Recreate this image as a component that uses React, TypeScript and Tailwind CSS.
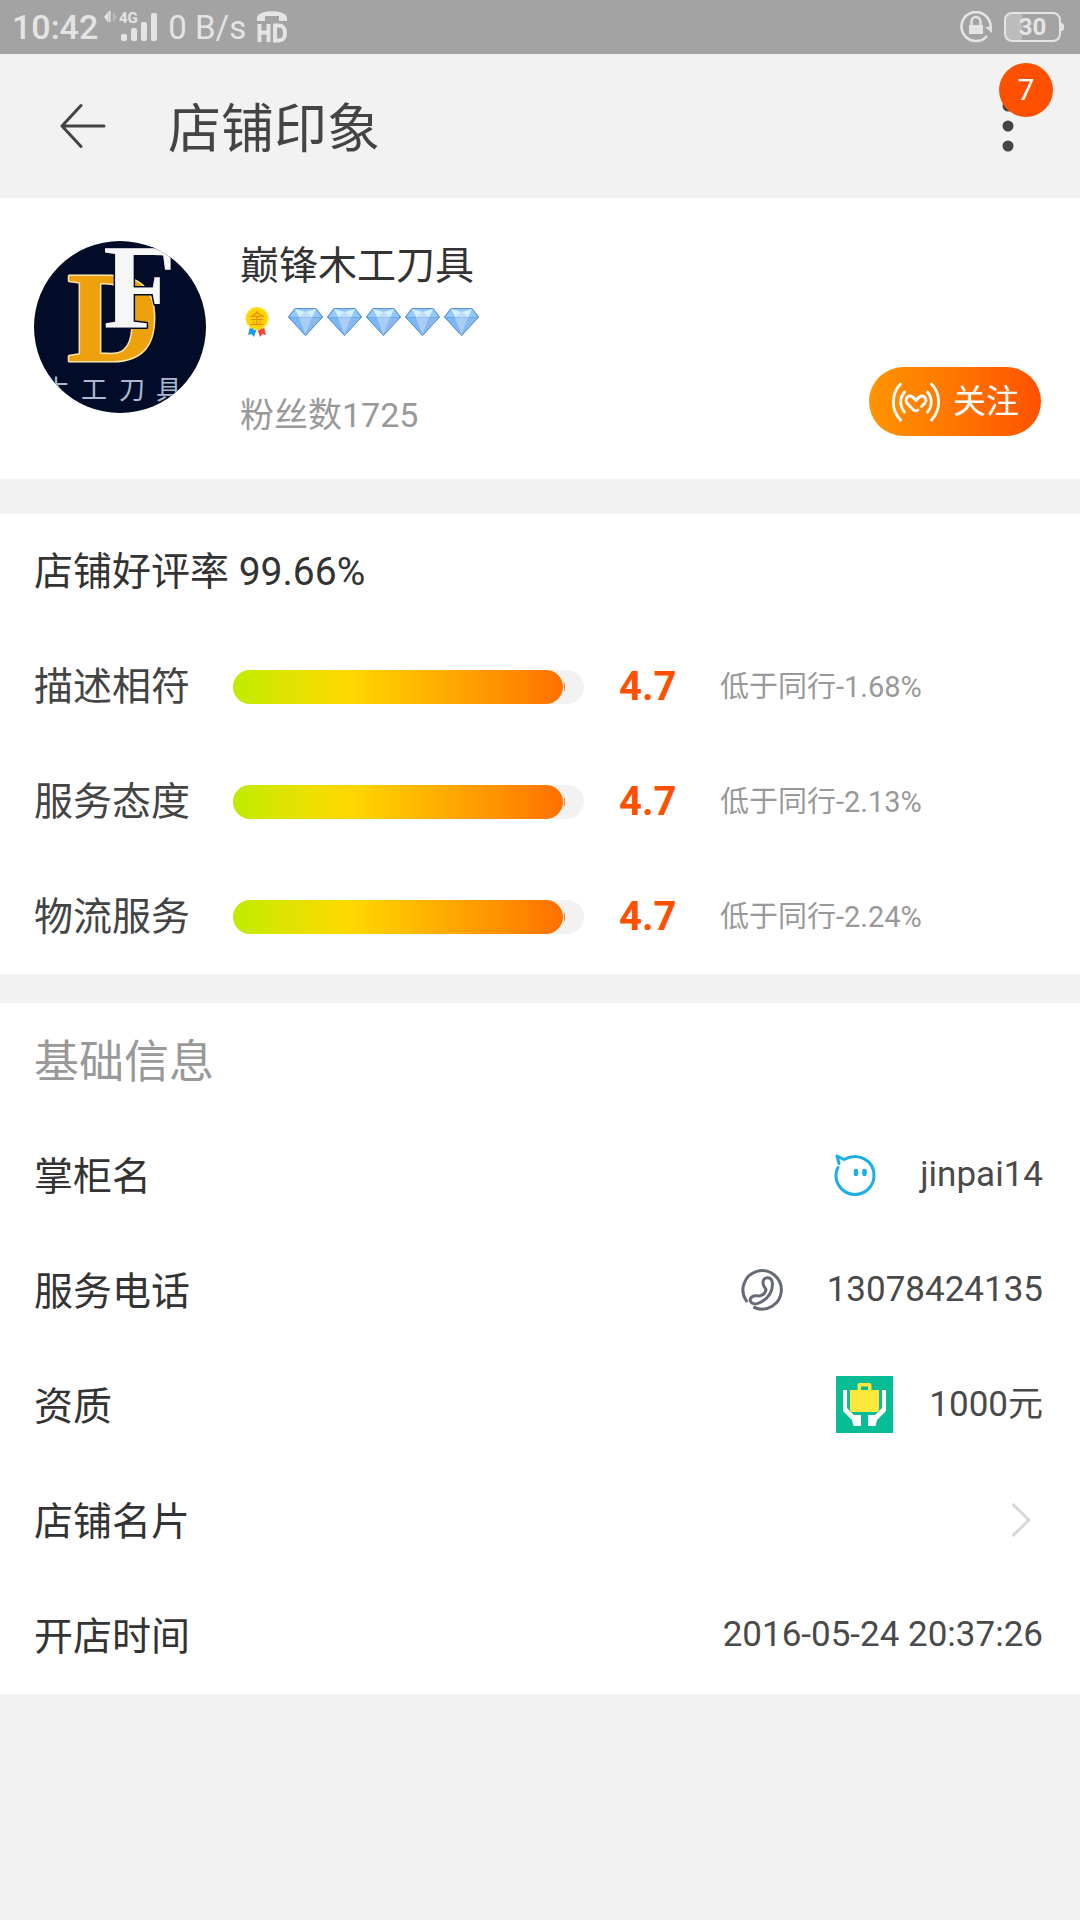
import type { ReactNode } from "react";

const ratings = [
  { label: "描述相符", score: 4.7, compare: "低于同行-1.68%" },
  { label: "服务态度", score: 4.7, compare: "低于同行-2.13%" },
  { label: "物流服务", score: 4.7, compare: "低于同行-2.24%" },
];

function StatusBar() {
  return (
    <div className="flex h-[54px] items-center justify-between bg-[#a3a3a3] pl-3 pr-4 text-[#e4e4e4]">
      <div className="flex items-center">
        <span className="text-[34px] font-medium leading-none">10:42</span>
        <svg className="ml-1 h-[54px] w-14" viewBox="0 0 56 54" fill="currentColor">
          <path d="M2 17l4-5v10z" />
          <path d="M7.500 11v11" stroke="currentColor" strokeWidth="2" />
          <path d="M11 12l4 5-4 5z" opacity=".35" />
          <text x="17" y="23" fontSize="15" fontWeight="700">
            4G
          </text>
          <rect x="19" y="34" width="6" height="7" rx="2" />
          <rect x="29" y="28" width="6" height="13" rx="2" />
          <rect x="39" y="22" width="6" height="19" rx="2" />
          <rect x="49" y="13" width="6" height="28" rx="2" />
        </svg>
        <span className="ml-2.5 text-[33px] leading-none">0 B/s</span>
        <svg className="ml-2.5 h-[54px] w-8" viewBox="0 0 32 54" fill="currentColor">
          <path d="M1 21v-3c0-9 30-9 30 0v3h-8v-5H9v5z" />
          <path
            d="M3.500 24v18M12.500 24v18M3.500 32.500h9M19 25.500v15h3c5 0 7-2 7-7.500s-2-7.500-7-7.500z"
            fill="none"
            stroke="currentColor"
            strokeWidth="4"
          />
        </svg>
      </div>
      <div className="flex items-center gap-3">
        <svg className="h-8 w-8" viewBox="0 0 32 32" fill="none" stroke="currentColor">
          <path d="M27 25A14.500 14.500 0 1 1 30.500 16" strokeWidth="2.600" />
          <path d="M25 16h7v6z" fill="currentColor" stroke="none" />
          <rect x="9" y="14" width="14" height="9" fill="currentColor" stroke="none" />
          <path d="M11.500 14v-3.500a4.500 4.500 0 0 1 9 0V14" strokeWidth="2.400" />
        </svg>
        <div className="flex items-center">
          <span className="flex h-[30px] w-[57px] items-center justify-center rounded-lg border-2 border-current bg-gradient-to-r from-[#bcbcbc] from-30% to-transparent to-30% text-2xl font-bold leading-none">
            30
          </span>
          <span className="h-2 w-[3px] rounded-r bg-current" />
        </div>
      </div>
    </div>
  );
}

function Header() {
  return (
    <header className="flex h-36 items-center justify-between pl-[60px] pr-[54px] text-[#444]">
      <div className="flex items-center gap-[62px]">
        <button type="button" aria-label="返回">
          <svg className="h-[46px] w-[46px]" viewBox="0 0 46 46" fill="none" stroke="currentColor" strokeWidth="3" strokeLinecap="round" strokeLinejoin="round">
            <path d="M21 2.500L2 23l19 20.500M2 23h42" />
          </svg>
        </button>
        <h1 className="pt-2 text-[53px] leading-none">店铺印象</h1>
      </div>
      <button type="button" aria-label="更多" className="relative">
        <svg className="h-[52px] w-9" viewBox="0 0 36 52" fill="currentColor">
          <circle cx="18" cy="6" r="5.500" />
          <circle cx="18" cy="26" r="5.500" />
          <circle cx="18" cy="46" r="5.500" />
        </svg>
        <span className="absolute -top-[37px] left-[9px] flex h-[54px] w-[54px] items-center justify-center rounded-full bg-[#ff5000] text-3xl text-white">
          7
        </span>
      </button>
    </header>
  );
}

function Avatar() {
  return (
    <svg className="h-[172px] w-[172px] shrink-0 rounded-full bg-[#020c28]" viewBox="0 0 172 172" role="img" aria-label="店铺头像">
      <g fontFamily="Liberation Serif, serif" fontWeight="700" strokeLinejoin="round" paintOrder="stroke">
        <text x="33" y="120" fontSize="129" fill="#eda10c" stroke="#fbe3a8" strokeWidth="3">
          D
        </text>
        <text x="69" y="87" fontSize="120" fill="#f7f7f7" stroke="#020c28" strokeWidth="3">
          F
        </text>
      </g>
      <g fill="#a9b9d0" fontSize="26">
        <text x="9" y="158">木</text>
        <text x="47" y="158">工</text>
        <text x="85" y="158">刀</text>
        <text x="122" y="158">具</text>
      </g>
    </svg>
  );
}

function Medal() {
  return (
    <svg className="h-[30px] w-6" viewBox="0 0 24 30">
      <path d="M5 20l-2 8 3.500-1 2.500 3 3-9z" fill="#1e9bf0" />
      <path d="M19 20l2 8-3.500-1-2.500 3-3-9z" fill="#f4473a" />
      <circle cx="12" cy="11.500" r="11" fill="#fdd400" stroke="#ffe23a" strokeWidth="1.500" strokeDasharray="3 1.500" />
      <text x="12" y="17" fontSize="15" textAnchor="middle" fill="#e8860c">
        金
      </text>
    </svg>
  );
}

function Diamond() {
  return (
    <svg className="h-7 w-[35px]" viewBox="0 0 35 28">
      <path d="M7 0h21l7 9-17.500 19L0 9z" fill="#6aa9ee" />
      <path d="M7 1h21l5.500 8h-32z" fill="#93c8f9" />
      <path d="M1.500 10H11l6.500 17z" fill="#79b7f6" />
      <path d="M11 10h13l-6.500 17z" fill="#a9cdf5" />
      <path d="M24 10h9.500l-16 17z" fill="#8bb9ee" />
      <path d="M7 1l4.500 8.500L17.500 4l6.500 5.500L28 1l-10.500 3z" fill="#d3f0fd" />
      <path d="M11 9.500L17.500 4l6.500 5.500z" fill="#bfdcf8" />
      <path d="M7 .5h21l6.500 8.500L17.500 27.500.5 9z" fill="none" stroke="#5b94d2" strokeWidth="1" />
    </svg>
  );
}

function ShopCard() {
  return (
    <section className="flex h-[281px] gap-[34px] bg-white px-[34px] pt-[43px]">
      <Avatar />
      <div className="flex flex-1 items-start justify-between">
        <div className="flex flex-col">
          <h2 className="pt-0.5 text-[39px] leading-[46px] text-[#333]">巅锋木工刀具</h2>
          <div className="mt-[18px] flex items-center pl-[5px]">
            <Medal />
            <div className="ml-[19px] flex gap-1">
              <Diamond />
              <Diamond />
              <Diamond />
              <Diamond />
              <Diamond />
            </div>
          </div>
          <p className="mt-[55px] text-[34px] leading-[46px] text-[#999]">粉丝数1725</p>
        </div>
        <button
          type="button"
          className="mr-[5px] mt-[126px] flex h-[69px] w-[172px] items-center justify-center gap-3 rounded-full bg-gradient-to-r from-[#ff9400] to-[#ff5000] text-[33px] leading-none text-white"
        >
          <svg className="h-10 w-[50px]" viewBox="0 0 50 40" fill="none" stroke="currentColor" strokeWidth="2.800" strokeLinecap="round" strokeLinejoin="round">
            <path d="M9.500 2C0 12 0 28 9.500 38M13.500 10c-5 6-5 14 0 20M40.500 2c9.500 10 9.500 26 0 36M36.500 10c5 6 5 14 0 20" />
            <path d="M27 28c-2 1.500-4 .5-5.500-1L16 21c-2-3-.5-7 3-7 3 0 4.500 3 6 4.500 1.500-1.500 3-4.500 6-4.500 3.500 0 5 4 3 7l-3.500 3.500" />
          </svg>
          关注
        </button>
      </div>
    </section>
  );
}

function RatingCard() {
  return (
    <section className="bg-white px-[34px]">
      <h2 className="flex h-[115px] items-center pt-0.5 text-[39px] leading-none text-[#333]">店铺好评率 99.66%</h2>
      {ratings.map((r) => (
        <div key={r.label} className="flex h-[115px] items-center">
          <span className="w-[199px] pt-0.5 text-[39px] leading-none text-[#444]">{r.label}</span>
          <div className="flex h-[34px] w-[351px] items-center rounded-full bg-[#f2f2f2]">
            <div
              className="h-full rounded-full bg-gradient-to-r from-[#bfec00] via-[#ffd800] via-35% to-[#ff6f00]"
              style={{ width: `${(r.score / 5) * 100}%` }}
            />
            <span className="ml-px h-2 w-px bg-[#ff8a3c]" />
          </div>
          <span className="ml-[35px] w-[101px] text-[40px] font-bold leading-none text-[#ff5000]">{r.score}</span>
          <span className="pt-0.5 text-[29px] leading-none text-[#999]">{r.compare}</span>
        </div>
      ))}
    </section>
  );
}

function InfoRow({ label, children }: { label: string; children: ReactNode }) {
  return (
    <div className="flex h-[115px] items-center justify-between">
      <dt className="pt-1 text-[39px] leading-none text-[#333]">{label}</dt>
      <dd className="flex items-center pb-0.5 text-[35px] leading-none text-[#4a4a4a]">{children}</dd>
    </div>
  );
}

function InfoCard() {
  return (
    <section className="bg-white pb-px pl-[34px] pr-[37px]">
      <h2 className="flex h-[115px] items-center pt-1 text-[45px] leading-none text-[#999]">基础信息</h2>
      <dl>
        <InfoRow label="掌柜名">
          <svg className="mr-11 h-[42px] w-[42px]" viewBox="0 0 42 42" fill="none" stroke="#1caee8" strokeWidth="3" strokeLinecap="round" strokeLinejoin="round">
            <path d="M5 9.500L3 2l7 3.500C24-2 40 6 40 21.500a19 19 0 0 1-38 0c0-3 .500-5.500 2-8" />
            <path d="M22 17v3M30.500 17v3" strokeWidth="4.500" />
          </svg>
          jinpai14
        </InfoRow>
        <InfoRow label="服务电话">
          <svg className="mr-11 h-[42px] w-[42px]" viewBox="0 0 42 42" fill="none" stroke="#666a75" strokeWidth="3" strokeLinecap="round" strokeLinejoin="round">
            <path d="M5.500 32A19.200 19.200 0 1 1 13.500 38.500" />
            <path d="M22 13.500c0-6.500 9-6.500 9.500 1C31.500 24 26 30.500 18 34c-6 2.500-10-1-8.500-4.500 2-4 5.500-3 8.500-2.500 3.500-.5 6.500-3 7-6.500-1.500-2.500-3-3.500-3-7z" />
          </svg>
          13078424135
        </InfoRow>
        <InfoRow label="资质">
          <svg className="mr-9 h-[57px] w-[57px]" viewBox="0 0 57 57">
            <path d="M0 0h57v57H0z" fill="#06bd96" />
            <path
              d="M14 14h7.500V9a2 2 0 0 1 2-2h10a2 2 0 0 1 2 2v5H43v19a3 3 0 0 1-3 3H17a3 3 0 0 1-3-3zM25 10.500V14h7v-3.500z"
              fill="#ffe83c"
              fillRule="evenodd"
            />
            <path
              d="M7 14h4v18l7 7h7v11h-7.500l-1.500-6-9-9zM50 14h-4v18l-7 7h-7v11h7.500l1.500-6 9-9z"
              fill="#fff"
            />
          </svg>
          1000元
        </InfoRow>
        <InfoRow label="店铺名片">
          <a href="#card" aria-label="店铺名片" className="mr-3">
            <svg className="h-9 w-5" viewBox="0 0 20 36" fill="none" stroke="#d5d5d5" strokeWidth="2.600">
              <path d="M1.500 2L18 18 1.500 34" />
            </svg>
          </a>
        </InfoRow>
        <InfoRow label="开店时间">2016-05-24 20:37:26</InfoRow>
      </dl>
    </section>
  );
}

export default function App() {
  return (
    <div className="min-h-screen bg-[#f2f2f2] font-['Roboto','Noto_Sans_CJK_SC',sans-serif]">
      <StatusBar />
      <Header />
      <main>
        <ShopCard />
        <div className="h-[35px]" />
        <RatingCard />
        <div className="h-[29px]" />
        <InfoCard />
      </main>
    </div>
  );
}
